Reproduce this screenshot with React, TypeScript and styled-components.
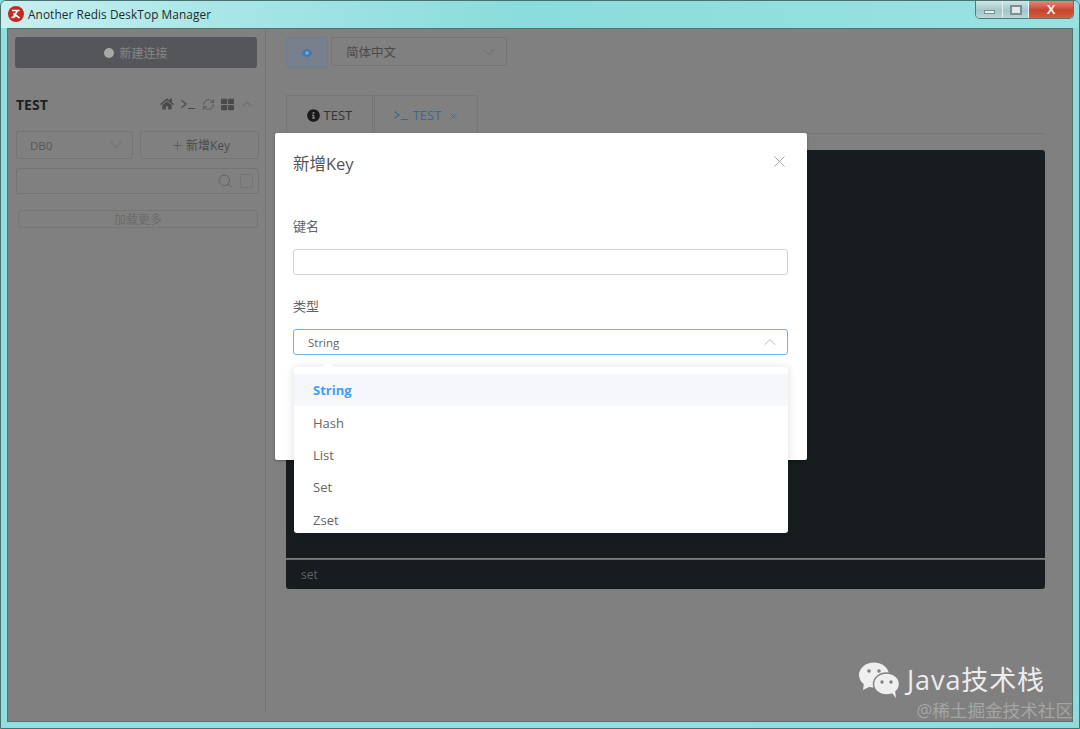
import { ChevronDown, ChevronUp, Plus, RefreshCw, Search, X } from "lucide-react";
import { FaHome, FaInfoCircle, FaThLarge } from "react-icons/fa";
import styled, { createGlobalStyle } from "styled-components";

const GlobalStyle = createGlobalStyle`
  html, body {
    margin: 0;
    padding: 0;
    background: #86dcdc;
  }
  * {
    box-sizing: border-box;
  }
`;

const fontStack = `"Open Sans", "Noto Sans", "Noto Sans CJK SC", sans-serif`;

const Frame = styled.div`
  position: relative;
  width: 1080px;
  height: 729px;
  display: flex;
  flex-direction: column;
  overflow: hidden;
  padding: 0 6px 6px 6px;
  font-family: ${fontStack};
  background: linear-gradient(90deg, #8fe0e0 0%, #93dfdf 60%, #8edcdc 100%);
  border: 1px solid #4c6f70;
  border-radius: 6px 6px 0 0;
`;

const TitleBar = styled.div`
  height: 27px;
  flex: none;
  display: flex;
  align-items: center;
  gap: 4px;
  margin: 0 -6px;
  padding: 0 6px 2px 7px;
  background: linear-gradient(90deg, #c9efef 0, #a8e6e6 220px, #8adcdc 520px, #9ae2e2 100%);
`;

const AppTitle = styled.span`
  font-size: 11.8px;
  color: #1c2b2c;
  letter-spacing: 0.1px;
`;

const WindowButtons = styled.div`
  margin-left: auto;
  align-self: flex-start;
  display: flex;
  height: 18px;
  margin-right: -1px;
  border: 1px solid #56787a;
  border-top: none;
  border-radius: 0 0 5px 5px;
  overflow: hidden;
`;

const WindowButton = styled.div<{ $close?: boolean }>`
  width: ${(p) => (p.$close ? "45px" : "26px")};
  display: flex;
  align-items: center;
  justify-content: center;
  border-left: 1px solid #e4f2f2;
  &:first-child {
    border-left: none;
  }
  background: ${(p) =>
    p.$close
      ? "linear-gradient(#dd8a78, #c8432d 55%, #d3603f)"
      : "linear-gradient(#cfe6e6, #a3c6c8 55%, #b8d8d8)"};
`;

const MinGlyph = styled.span`
  width: 11px;
  height: 4px;
  margin-top: 5px;
  background: #e8eeee;
  border: 1px solid #7d8f92;
`;

const MaxGlyph = styled.span`
  width: 12px;
  height: 10px;
  border: 2px solid #7d9094;
  background: #dfe9ea;
`;

const CloseGlyph = styled.span`
  font: bold 13px/1 "Liberation Sans", sans-serif;
  color: #f3eeea;
`;

const Client = styled.div`
  flex: 1;
  min-height: 0;
  position: relative;
  display: flex;
  background: #808080;
  border: 1px solid #57716f;
`;

const Sidebar = styled.aside`
  width: 258px;
  flex: none;
  height: 684px;
  display: flex;
  flex-direction: column;
  padding: 8px 6px 0 7px;
  border-right: 1px solid #747474;
`;

const NewConnection = styled.div`
  height: 31px;
  width: 242px;
  display: flex;
  align-items: center;
  justify-content: center;
  gap: 5px;
  border-radius: 3px;
  background: #55565a;
  color: #868686;
  font-size: 12px;
`;

const Dot = styled.span`
  width: 10px;
  height: 10px;
  border-radius: 50%;
  background: #a8a8a8;
`;

const ServerHeader = styled.div`
  margin-top: 26px;
  height: 20px;
  display: flex;
  align-items: center;
  justify-content: space-between;
  padding: 0 5px 0 1px;
`;

const ServerName = styled.span`
  font-size: 14px;
  font-weight: 700;
  color: #1f1f1f;
`;

const IconRow = styled.div`
  display: flex;
  align-items: center;
  gap: 6px;
  color: #4b4b4b;
`;

const ThinIcon = styled.span`
  display: flex;
  color: #555;
`;

const KeyRow = styled.div`
  margin-top: 17px;
  display: flex;
  gap: 7px;
  padding-left: 1px;
`;

const DbSelect = styled.div`
  width: 117px;
  height: 28px;
  display: flex;
  align-items: center;
  justify-content: space-between;
  padding: 0 6px 0 13px;
  border: 1px solid #747474;
  border-radius: 3px;
  font-size: 11.5px;
  color: #565656;
`;

const NewKey = styled.div`
  width: 119px;
  height: 28px;
  display: flex;
  align-items: center;
  justify-content: center;
  gap: 2px;
  padding-left: 2px;
  border: 1px solid #747474;
  border-radius: 3px;
  font-size: 12px;
  color: #4c4c4c;
`;

const SearchBox = styled.div`
  margin: 9px 0 0 1px;
  width: 243px;
  height: 26px;
  display: flex;
  align-items: center;
  justify-content: flex-end;
  gap: 7px;
  padding-right: 5px;
  border: 1px solid #747474;
  border-radius: 3px;
  color: #606060;
`;

const SearchCheck = styled.span`
  width: 13px;
  height: 14px;
  border: 1px solid #747474;
  border-radius: 2px;
`;

const LoadMore = styled.div`
  margin: 16px 0 0 3px;
  width: 240px;
  height: 18px;
  display: flex;
  align-items: center;
  justify-content: center;
  border: 1px solid #767676;
  border-radius: 3px;
  font-size: 12px;
  color: #6b6b6b;
`;

const Main = styled.main`
  flex: 1;
  min-width: 0;
  display: flex;
  flex-direction: column;
  padding: 8px 27px 0 20px;
`;

const TopBar = styled.div`
  display: flex;
  align-items: flex-start;
  gap: 3px;
`;

const ThemeButton = styled.div`
  width: 42px;
  height: 31px;
  display: flex;
  align-items: center;
  justify-content: center;
  background: #77808c;
  border: 1px solid #6c7d92;
  border-radius: 3px;
`;

const LangSelect = styled.div`
  width: 176px;
  height: 29px;
  display: flex;
  align-items: center;
  justify-content: space-between;
  padding: 0 7px 0 14px;
  border: 1px solid #747474;
  border-radius: 3px;
  font-size: 12.5px;
  color: #4a4a4a;
`;

const Tabs = styled.div`
  margin-top: 27px;
  height: 39px;
  display: flex;
  border-bottom: 1px solid #767676;
`;

const Tab = styled.div<{ $active?: boolean }>`
  height: 39px;
  display: flex;
  align-items: center;
  gap: 4px;
  padding: 0 ${(p) => (p.$active ? "18px" : "19.5px")};
  margin-right: 1px;
  border: 1px solid #767676;
  border-bottom: none;
  font-size: 13px;
  color: ${(p) => (p.$active ? "#3d6691" : "#333")};
`;

const Terminal = styled.div`
  margin-top: 16px;
  height: 408px;
  background: #171c1e;
  border-radius: 3px 3px 0 0;
`;

const TerminalInput = styled.div`
  height: 30px;
  margin-top: 1px;
  display: flex;
  align-items: center;
  padding-left: 15px;
  background: #171c1e;
  border-top: 1px solid #6a6d6e;
  border-radius: 0 0 3px 3px;
  font-size: 12px;
  color: #5e6264;
`;

const Modal = styled.div`
  position: absolute;
  left: 267px;
  top: 104px;
  width: 532px;
  height: 327px;
  display: flex;
  flex-direction: column;
  padding: 19px 19px 0 18px;
  background: #fff;
  border-radius: 2px;
  box-shadow: 0 1px 3px rgba(0, 0, 0, 0.3);
`;

const ModalHead = styled.div`
  height: 22px;
  display: flex;
  align-items: center;
  justify-content: space-between;
  font-size: 16.5px;
  color: #555;
  margin-bottom: 42px;
`;

const CloseButton = styled.span`
  display: flex;
  color: #909399;
  margin: -4px -1px 0 0;
`;

const FieldLabel = styled.div`
  height: 20px;
  margin-bottom: 13px;
  font-size: 13px;
  line-height: 20px;
  color: #5f6266;
`;

const KeyInput = styled.div`
  height: 26px;
  margin-bottom: 21px;
  border: 1px solid #cfd2d6;
  border-radius: 3px;
`;

const TypeSelect = styled.div`
  position: relative;
  height: 26px;
  display: flex;
  align-items: center;
  justify-content: space-between;
  padding: 0 7px 0 14px;
  border: 1px solid #6eb1f2;
  border-radius: 3px;
  font-size: 11.5px;
  color: #666;
`;

const Dropdown = styled.ul`
  position: absolute;
  left: 0;
  top: 37px;
  width: 494px;
  height: 166px;
  margin: 0;
  padding: 7px 0;
  list-style: none;
  background: #fff;
  border-radius: 3px;
  box-shadow: 0 1px 10px rgba(0, 0, 0, 0.14);
  &::before {
    content: "";
    position: absolute;
    left: 30px;
    top: -4px;
    width: 8px;
    height: 8px;
    background: #fff;
    transform: rotate(45deg);
  }
`;

const Option = styled.li<{ $selected?: boolean }>`
  position: relative;
  height: 32.4px;
  display: flex;
  align-items: center;
  padding-left: 19px;
  font-size: 13px;
  font-weight: ${(p) => (p.$selected ? 700 : 400)};
  color: ${(p) => (p.$selected ? "#409eff" : "#666")};
  background: ${(p) => (p.$selected ? "#f5f7fa" : "transparent")};
`;

const Watermark = styled.div`
  position: absolute;
  right: -1px;
  bottom: 0;
  display: flex;
  flex-direction: column;
  align-items: flex-end;
  pointer-events: none;
`;

const BrandRow = styled.div`
  display: flex;
  align-items: center;
  gap: 7px;
  margin-right: 28px;
  font-size: 27px;
  line-height: 34px;
  color: #ededed;
  letter-spacing: 0.9px;
`;

const Credit = styled.div`
  margin-top: 1px;
  font-size: 17.6px;
  line-height: 22px;
  color: #a5a5a5;
`;

const TYPES = ["String", "Hash", "List", "Set", "Zset"];

function AppLogo() {
  return (
    <svg width="16" height="16" viewBox="0 0 16 16">
      <circle cx="8" cy="8" r="8" fill="#c4281f" />
      <path
        d="M4 4.5h7.5M9.5 4.5 5 12M5.5 7.5l6 4.5M3.5 11.5l4-1"
        stroke="#fff"
        strokeWidth="1.6"
        fill="none"
      />
    </svg>
  );
}

function Prompt({ color, size = 16 }: { color: string; size?: number }) {
  return (
    <svg width={size} height={size} viewBox="0 0 16 16" fill="none" stroke={color} strokeWidth="1.2">
      <path d="M1.5 4.5 6 8l-4.5 3.5M8 12.5h7" />
    </svg>
  );
}

function ThemeEye() {
  return (
    <svg width="12" height="10" viewBox="0 0 12 10">
      <path d="M0.5 5C2 2 4 1 6 1s4 1 5.5 4C10 8 8 9 6 9S2 8 .5 5Z" fill="#3f79b6" />
      <circle cx="6" cy="5" r="1.7" fill="#8fa6c0" />
    </svg>
  );
}

function WeChatLogo() {
  return (
    <svg width="41" height="36" viewBox="0 0 41 36" fill="#efefef">
      <ellipse cx="15" cy="13" rx="15" ry="12.5" />
      <path d="M5 21 4 28l8-4Z" />
      <ellipse cx="27.5" cy="22" rx="13" ry="11" stroke="#808080" strokeWidth="1.4" />
      <path d="M33 31l4 5-1-8Z" />
      <circle cx="10" cy="9" r="1.8" fill="#808080" />
      <circle cx="20" cy="9" r="1.8" fill="#808080" />
      <circle cx="23" cy="20" r="1.7" fill="#808080" />
      <circle cx="32" cy="20" r="1.7" fill="#808080" />
    </svg>
  );
}

export default function App() {
  return (
    <>
      <GlobalStyle />
      <Frame>
        <TitleBar>
          <AppLogo />
          <AppTitle>Another Redis DeskTop Manager</AppTitle>
          <WindowButtons>
            <WindowButton>
              <MinGlyph />
            </WindowButton>
            <WindowButton>
              <MaxGlyph />
            </WindowButton>
            <WindowButton $close>
              <CloseGlyph>X</CloseGlyph>
            </WindowButton>
          </WindowButtons>
        </TitleBar>
        <Client>
          <Sidebar>
            <NewConnection>
              <Dot />
              新建连接
            </NewConnection>
            <ServerHeader>
              <ServerName>TEST</ServerName>
              <IconRow>
                <FaHome size={14} />
                <Prompt color="#4b4b4b" />
                <ThinIcon>
                  <RefreshCw size={13} strokeWidth={1.6} />
                </ThinIcon>
                <FaThLarge size={13} />
                <ThinIcon>
                  <ChevronUp size={14} strokeWidth={1.3} />
                </ThinIcon>
              </IconRow>
            </ServerHeader>
            <KeyRow>
              <DbSelect>
                DB0
                <ChevronDown size={20} strokeWidth={1.1} color="#6a6a6a" />
              </DbSelect>
              <NewKey>
                <Plus size={13} strokeWidth={1.2} />
                新增Key
              </NewKey>
            </KeyRow>
            <SearchBox>
              <Search size={16} strokeWidth={1.4} />
              <SearchCheck />
            </SearchBox>
            <LoadMore>加载更多</LoadMore>
          </Sidebar>
          <Main>
            <TopBar>
              <ThemeButton>
                <ThemeEye />
              </ThemeButton>
              <LangSelect>
                简体中文
                <ChevronDown size={20} strokeWidth={1.1} color="#6a6a6a" />
              </LangSelect>
            </TopBar>
            <Tabs>
              <Tab>
                <FaInfoCircle size={13} color="#1a1a1a" />
                TEST
              </Tab>
              <Tab $active>
                <Prompt color="#3d6691" />
                TEST
                <X size={11} strokeWidth={1.4} style={{ marginLeft: 3, marginTop: 3 }} />
              </Tab>
            </Tabs>
            <Terminal />
            <TerminalInput>set</TerminalInput>
          </Main>
          <Modal>
            <ModalHead>
              新增Key
              <CloseButton>
                <X size={19} strokeWidth={1} />
              </CloseButton>
            </ModalHead>
            <FieldLabel>键名</FieldLabel>
            <KeyInput />
            <FieldLabel>类型</FieldLabel>
            <TypeSelect>
              String
              <ChevronUp size={20} strokeWidth={1.1} color="#b4b7bc" />
              <Dropdown>
                {TYPES.map((type) => (
                  <Option key={type} $selected={type === "String"}>
                    {type}
                  </Option>
                ))}
              </Dropdown>
            </TypeSelect>
          </Modal>
          <Watermark>
            <BrandRow>
              <WeChatLogo />
              Java技术栈
            </BrandRow>
            <Credit>@稀土掘金技术社区</Credit>
          </Watermark>
        </Client>
      </Frame>
    </>
  );
}
